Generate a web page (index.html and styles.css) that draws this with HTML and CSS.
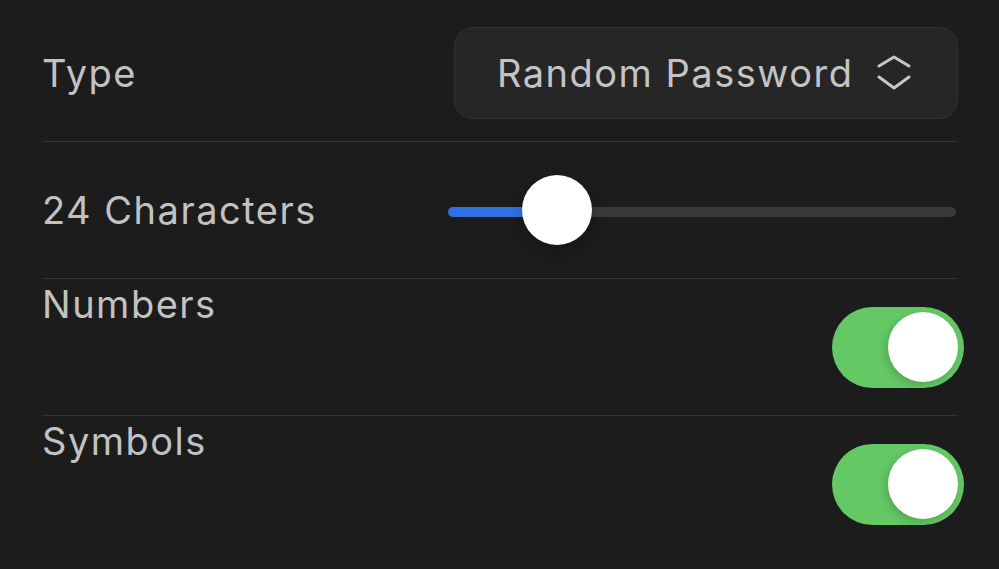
FILE: index.html
```html
<!DOCTYPE html>
<html lang="en">
<head>
<meta charset="utf-8">
<title>Password Options</title>
<link rel="stylesheet" href="styles.css">
</head>
<body>
<div class="panel">
  <div class="row row-type">
    <span class="label">Type</span>
    <div class="select">
      <span class="select-text">Random Password</span>
      <svg class="chevrons" width="34" height="38" viewBox="0 0 34 38" aria-hidden="true">
        <polyline points="2,11 17,2 32,11" fill="none" stroke="#c6c6c6" stroke-width="3" stroke-linecap="round" stroke-linejoin="round"/>
        <polyline points="2,22 17,33 32,22" fill="none" stroke="#c6c6c6" stroke-width="3" stroke-linecap="round" stroke-linejoin="round"/>
      </svg>
    </div>
  </div>
  <div class="row row-length">
    <span class="label">24 Characters</span>
    <div class="slider">
      <div class="track"><div class="fill" style="width:109px"></div></div>
      <div class="thumb" style="left:74px"></div>
    </div>
  </div>
  <div class="row row-toggle">
    <span class="label label-top">Numbers</span>
    <div class="toggle on"><div class="knob"></div></div>
  </div>
  <div class="row row-toggle last">
    <span class="label label-top">Symbols</span>
    <div class="toggle on"><div class="knob"></div></div>
  </div>
</div>
</body>
</html>
```

FILE: styles.css
```css
html, body {
  margin: 0;
  padding: 0;
  background: #1c1c1c;
}
body {
  width: 999px;
  height: 569px;
  overflow: hidden;
  font-family: Inter, "Liberation Sans", sans-serif;
  color: #c2c2c2;
}
.panel {
  margin-left: 42px;
  width: 916px;
}
.row {
  display: flex;
  align-items: center;
  justify-content: space-between;
  border-bottom: 1px solid #353537;
  box-sizing: border-box;
}
.row.last {
  border-bottom: none;
}
.row-type {
  height: 142px;
  padding-top: 27px;
  padding-bottom: 22px;
}
.row-length {
  height: 137px;
}
.row-toggle {
  height: 137px;
}
.label {
  font-size: 38px;
  line-height: 46px;
  letter-spacing: 1.5px;
}
.label-top {
  align-self: flex-start;
  padding-top: 2px;
}
.select {
  box-sizing: border-box;
  width: 504px;
  height: 92px;
  border: 1px solid #323232;
  border-radius: 19px;
  background: #262626;
  display: flex;
  align-items: center;
  padding-left: 42px;
}
.select-text {
  font-size: 38px;
  line-height: 46px;
  letter-spacing: 1.5px;
  color: #c4c4c4;
}
.chevrons {
  margin-left: 24px;
  margin-top: 2px;
}
.slider {
  position: relative;
  width: 508px;
  height: 70px;
  margin-right: 2px;
}
.track {
  position: absolute;
  left: 0;
  right: 0;
  top: 32px;
  height: 10px;
  border-radius: 5px;
  background: #3a3a3d;
}
.fill {
  height: 100%;
  border-radius: 5px;
  background: #3070e6;
}
.thumb {
  position: absolute;
  top: 0;
  width: 70px;
  height: 70px;
  border-radius: 50%;
  background: #ffffff;
  box-shadow: 0 6px 14px rgba(0, 0, 0, 0.25);
}
.toggle {
  box-sizing: border-box;
  width: 132px;
  height: 81px;
  border-radius: 41px;
  background: #64c865;
  margin-right: -6px;
  padding: 5px 6px;
  display: flex;
  justify-content: flex-end;
}
.knob {
  width: 70px;
  height: 70px;
  border-radius: 50%;
  background: #ffffff;
  box-shadow: -2px 3px 8px rgba(0, 0, 0, 0.18);
}
```
